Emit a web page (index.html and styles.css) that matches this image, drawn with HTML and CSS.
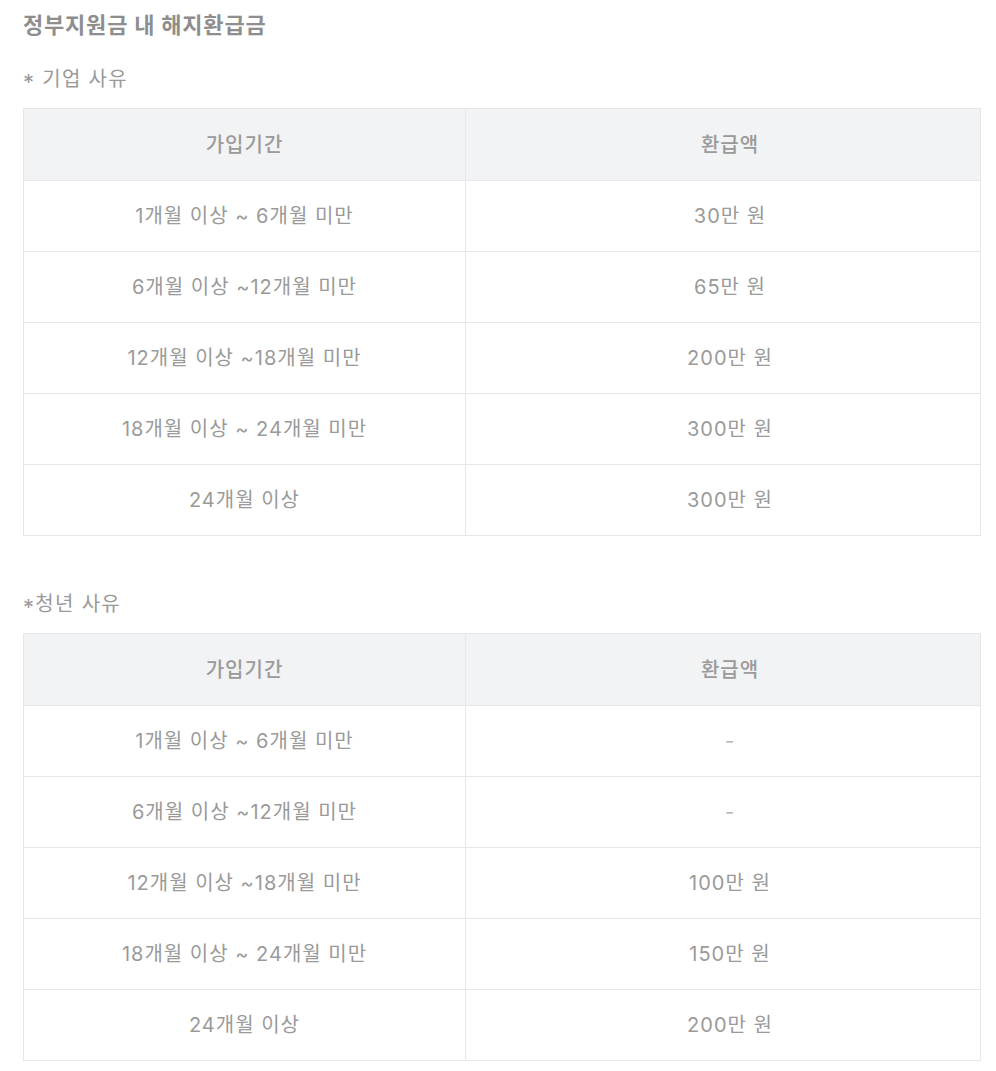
FILE: index.html
```html
<!DOCTYPE html>
<html lang="ko">
<head>
<meta charset="utf-8">
<title>정부지원금 내 해지환급금</title>
<link rel="stylesheet" href="styles.css">
</head>
<body>
<div class="page">
  <h2 class="title">정부지원금 내 해지환급금</h2>

  <p class="sub"><span class="ast">*</span> 기업 사유</p>
  <table class="refund">
    <colgroup><col class="c1"><col class="c2"></colgroup>
    <thead>
      <tr><th>가입기간</th><th class="amt">환급액</th></tr>
    </thead>
    <tbody>
      <tr><td>1개월 이상 ~ 6개월 미만</td><td class="amt">30만 원</td></tr>
      <tr><td>6개월 이상 ~12개월 미만</td><td class="amt">65만 원</td></tr>
      <tr><td>12개월 이상 ~18개월 미만</td><td class="amt">200만 원</td></tr>
      <tr><td>18개월 이상 ~ 24개월 미만</td><td class="amt">300만 원</td></tr>
      <tr><td>24개월 이상</td><td class="amt">300만 원</td></tr>
    </tbody>
  </table>

  <p class="sub sub2"><span class="ast">*</span>청년 사유</p>
  <table class="refund">
    <colgroup><col class="c1"><col class="c2"></colgroup>
    <thead>
      <tr><th>가입기간</th><th class="amt">환급액</th></tr>
    </thead>
    <tbody>
      <tr><td>1개월 이상 ~ 6개월 미만</td><td class="amt dash">-</td></tr>
      <tr><td>6개월 이상 ~12개월 미만</td><td class="amt dash">-</td></tr>
      <tr><td>12개월 이상 ~18개월 미만</td><td class="amt">100만 원</td></tr>
      <tr><td>18개월 이상 ~ 24개월 미만</td><td class="amt">150만 원</td></tr>
      <tr><td>24개월 이상</td><td class="amt">200만 원</td></tr>
    </tbody>
  </table>
</div>
</body>
</html>
```

FILE: styles.css
```css
html, body {
  margin: 0;
  padding: 0;
  background: #ffffff;
}

body {
  font-family: "Inter", "Noto Sans CJK KR", "Noto Sans", sans-serif;
  color: #9a9a9a;
}

.page {
  padding: 10px 15px 0 23px;
}

.title {
  margin: 0;
  font-size: 22px;
  font-weight: 700;
  line-height: 30px;
  color: #8e8e8e;
  letter-spacing: 0.8px;
}

.sub {
  margin: 24px 0 14px;
  font-size: 20px;
  font-weight: 400;
  line-height: 30px;
  color: #9a9a9a;
  letter-spacing: 1.3px;
}

.sub .ast {
  display: inline-block;
  vertical-align: -4px;
  font-size: 22px;
  line-height: 1;
}

.sub2 {
  margin-top: 53px;
}

.refund {
  width: 958px;
  border-collapse: collapse;
  table-layout: fixed;
  border: 1px solid #e6e7ea;
}

.refund .c1 {
  width: 442px;
}

.refund th,
.refund td {
  border: 1px solid #e6e7ea;
  padding: 0;
  height: 70px;
  text-align: center;
  vertical-align: middle;
  font-size: 20px;
  line-height: 28px;
  color: #9a9a9a;
  letter-spacing: 1px;
}

.refund th {
  background: #f2f3f5;
  font-weight: 500;
  height: 71px;
}

.refund td {
  font-weight: 400;
}

.refund .amt {
  padding-left: 14px;
}

.refund .dash {
  color: #b5b5b5;
}
```
